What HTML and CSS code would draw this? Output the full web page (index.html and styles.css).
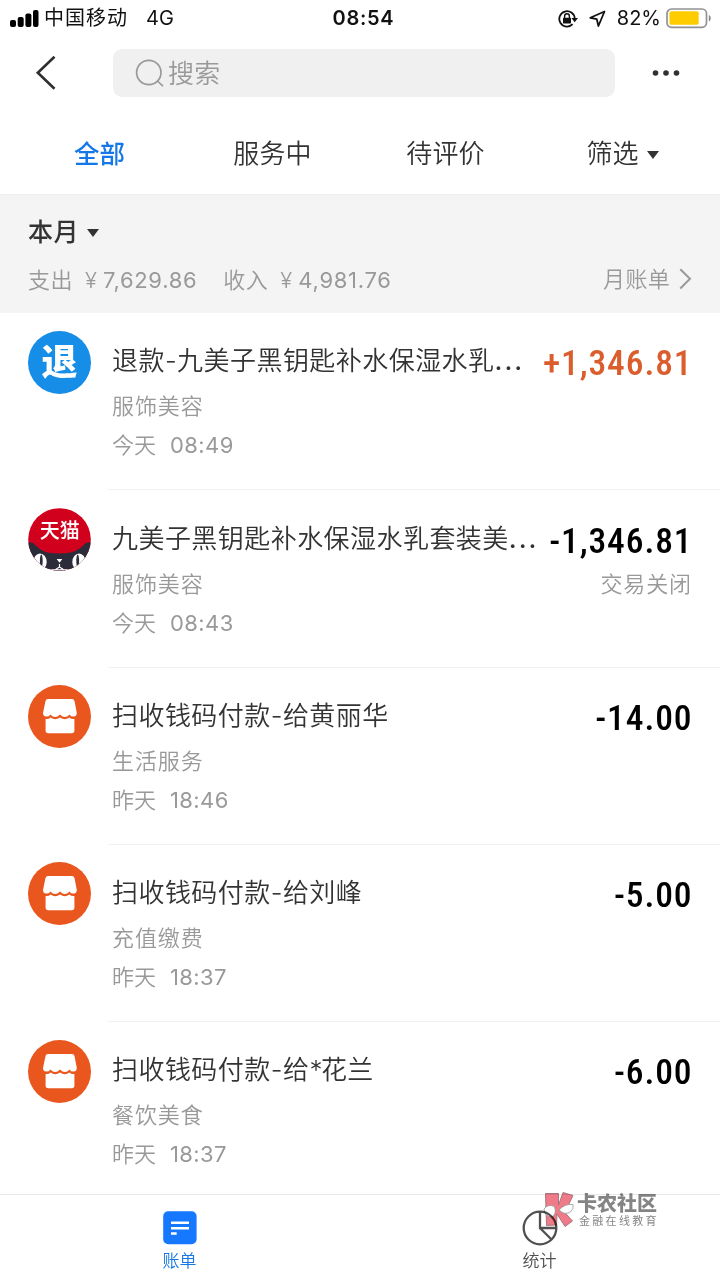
FILE: index.html
```html
<!DOCTYPE html>
<html lang="zh-CN">
<head>
<meta charset="utf-8">
<title>账单</title>
<link rel="stylesheet" href="styles.css">
</head>
<body>
<div class="screen">
  <header class="status">
    <div class="status-left">
      <svg class="signal" width="29" height="18" viewBox="0 0 29 18"><rect x="0" y="10" width="6" height="7" rx="2"/><rect x="7.7" y="7" width="6" height="10" rx="2"/><rect x="15.4" y="3.5" width="6" height="13.5" rx="2"/><rect x="23" y="0" width="5.5" height="17" rx="2"/></svg>
      <span class="carrier">中国移动</span><span class="network">4G</span>
    </div>
    <div class="clock">08:54</div>
    <div class="status-right">
      <svg width="20" height="18" viewBox="0 0 20 18" fill="none" stroke="#111" stroke-width="1.8"><path d="M14.6 14.2A7.7 7.7 0 1 1 16.7 8.5"/><path d="M13.4 8h6.6l-3.3 4.2z" fill="#111" stroke="none"/><rect x="5" y="7.8" width="8" height="5.6" rx=".6" fill="#111" stroke="none"/><path d="M6.6 8V6.2a2.4 2.4 0 0 1 4.8 0V8" stroke-width="1.4"/></svg>
      <svg class="locate" width="17" height="18" viewBox="0 0 17 18" fill="none" stroke="#111" stroke-width="1.8" stroke-linejoin="round"><path d="M15.5 1.5 1.3 7.8l6.5 1.4 1.6 6.8z"/></svg>
      <span class="percent">82%</span>
      <svg class="battery" width="46" height="21" viewBox="0 0 46 21"><rect x="1" y="1" width="39.5" height="18.3" rx="4.5" fill="#fff" stroke="#929292" stroke-width="1.7"/><rect x="3.4" y="3.3" width="29.3" height="13.5" rx="2" fill="#fc0"/><path d="M42.8 7c2.6 1.2 2.6 5.3 0 6.5z" fill="#888"/></svg>
    </div>
  </header>
  <nav class="toolbar">
    <svg class="back" width="22" height="36" viewBox="0 0 22 36" fill="none" stroke="#2f2f2f" stroke-width="2.6"><path d="M19.5 1.8 2.8 17.8l16.7 16"/></svg>
    <div class="search">
      <svg width="29" height="29" viewBox="0 0 29 29" fill="none" stroke="#999" stroke-width="1.7"><circle cx="13.8" cy="13.5" r="12.2"/><path d="m22.4 22 5.6 5.2"/></svg>
      <span>搜索</span>
    </div>
    <svg class="more" width="28" height="8" viewBox="0 0 28 8" fill="#303030"><circle cx="3.5" cy="4" r="2.8"/><circle cx="14" cy="4" r="2.8"/><circle cx="24.5" cy="4" r="2.8"/></svg>
  </nav>
  <div class="tabs">
    <div class="tab active">全部</div><div class="tab">服务中</div><div class="tab">待评价</div>
    <div class="tab filter">筛选<i class="caret"></i></div>
  </div>
  <section class="month">
    <div class="month-name">本月<i class="caret"></i></div>
    <div class="totals">
      <span class="word">支出</span><span class="yen">¥</span><span class="sum">7,629.86</span>
      <span class="word income">收入</span><span class="yen">¥</span><span class="sum">4,981.76</span>
      <span class="monthly">月账单</span>
      <svg width="13" height="22" viewBox="0 0 13 22" fill="none" stroke="#999" stroke-width="2"><path d="m1.3 1.3 9.7 9.5-9.7 9.7"/></svg>
    </div>
  </section>
  <main class="list">
    <article class="row">
      <div class="avatar refund">退</div>
      <div class="info">
        <div class="line"><span class="title">退款-九美子黑钥匙补水保湿水乳<span class="dots">...</span></span><span class="amount plus">+1,346.81</span></div>
        <div class="meta">服饰美容</div>
        <div class="time"><span>今天</span><span class="hour">08:49</span></div>
      </div>
    </article>
    <article class="row">
      <div class="avatar">
        <svg width="63" height="63" viewBox="0 0 63 63"><defs><clipPath id="disc"><circle cx="31.5" cy="31.5" r="31.3"/></clipPath></defs><g clip-path="url(#disc)"><rect width="63" height="63" fill="#d1001c"/><path d="M0 34 5 35C9 39 14 43 19 44.6Q31 46.5 43 44.6C49 43 54 39 58 35l5-1v29H0z" fill="#2b2b3a"/><ellipse cx="12" cy="54" rx="6.7" ry="8.6" fill="#fff"/><ellipse cx="51" cy="54" rx="6.7" ry="8.6" fill="#fff"/><ellipse cx="13.3" cy="53" rx="1.4" ry="6.5" fill="#2b2b3a"/><ellipse cx="49.7" cy="53" rx="1.4" ry="6.5" fill="#2b2b3a"/><path d="M28.7 51h5.6l-2.8 3.8z" fill="#fff"/><path d="M31.5 56v3l-4.5 3m4.5-3 4.5 3M18 61.8h27" fill="none" stroke="#fff" stroke-width="1.2"/></g><text class="tmall" x="31.8" y="30" text-anchor="middle">天猫</text></svg>
      </div>
      <div class="info">
        <div class="line"><span class="title">九美子黑钥匙补水保湿水乳套装美<span class="dots">...</span></span><span class="amount">-1,346.81</span></div>
        <div class="meta"><span>服饰美容</span><span class="state">交易关闭</span></div>
        <div class="time"><span>今天</span><span class="hour">08:43</span></div>
      </div>
    </article>
    <article class="row">
      <div class="avatar shop"><svg width="36" height="37" viewBox="0 0 36 37" fill="#fff"><path d="M6 1h24q2 0 2.5 2l2.3 12q0 3-3 3.6-3 .2-4.3-2.2-4.5 5-9.5 0-5 5-9.5 0Q7 18.8 4 18.6 1 18 1 15L3.5 3Q4 1 6 1z"/><path d="M3.6 21q3.2.4 5-1.6 4.5 3.6 9.4 0 4.9 3.6 9.4 0 1.8 2 5 1.6v11.5q0 2.7-2.7 2.7H6.3q-2.7 0-2.7-2.7z"/></svg></div>
      <div class="info">
        <div class="line"><span class="title">扫收钱码付款-给黄丽华</span><span class="amount">-14.00</span></div>
        <div class="meta">生活服务</div>
        <div class="time"><span>昨天</span><span class="hour">18:46</span></div>
      </div>
    </article>
    <article class="row">
      <div class="avatar shop"><svg width="36" height="37" viewBox="0 0 36 37" fill="#fff"><path d="M6 1h24q2 0 2.5 2l2.3 12q0 3-3 3.6-3 .2-4.3-2.2-4.5 5-9.5 0-5 5-9.5 0Q7 18.8 4 18.6 1 18 1 15L3.5 3Q4 1 6 1z"/><path d="M3.6 21q3.2.4 5-1.6 4.5 3.6 9.4 0 4.9 3.6 9.4 0 1.8 2 5 1.6v11.5q0 2.7-2.7 2.7H6.3q-2.7 0-2.7-2.7z"/></svg></div>
      <div class="info">
        <div class="line"><span class="title">扫收钱码付款-给刘峰</span><span class="amount">-5.00</span></div>
        <div class="meta">充值缴费</div>
        <div class="time"><span>昨天</span><span class="hour">18:37</span></div>
      </div>
    </article>
    <article class="row">
      <div class="avatar shop"><svg width="36" height="37" viewBox="0 0 36 37" fill="#fff"><path d="M6 1h24q2 0 2.5 2l2.3 12q0 3-3 3.6-3 .2-4.3-2.2-4.5 5-9.5 0-5 5-9.5 0Q7 18.8 4 18.6 1 18 1 15L3.5 3Q4 1 6 1z"/><path d="M3.6 21q3.2.4 5-1.6 4.5 3.6 9.4 0 4.9 3.6 9.4 0 1.8 2 5 1.6v11.5q0 2.7-2.7 2.7H6.3q-2.7 0-2.7-2.7z"/></svg></div>
      <div class="info">
        <div class="line"><span class="title">扫收钱码付款-给<span class="star">*</span>花兰</span><span class="amount">-6.00</span></div>
        <div class="meta">餐饮美食</div>
        <div class="time"><span>昨天</span><span class="hour">18:37</span></div>
      </div>
    </article>
  </main>
  <footer class="bottom">
    <div class="dest current">
      <svg width="36" height="36" viewBox="0 0 36 36"><rect x="1.2" y="1.2" width="33.4" height="33" rx="5" fill="#1677ff"/><path d="M9 12.8h18M9 18.2h18M9 23.5h5.7" stroke="#fff" stroke-width="2.6"/></svg>
      <span>账单</span>
    </div>
    <div class="dest">
      <svg width="36" height="36" viewBox="0 0 36 36" fill="none" stroke="#505050" stroke-width="2.3"><circle cx="18" cy="18" r="16.3"/><path d="M18 1.7V18h16.3M18 18l11.5 11.5"/></svg>
      <span>统计</span>
    </div>
    <div class="watermark">
      <svg width="31" height="38" viewBox="0 0 31 38"><g fill="#ed6d7a" stroke="#966067" stroke-width=".9"><path d="M2.5 2.5H15.5L15.5 14 20 1.5 30 4.5 25.5 14 19 18.5 29.5 30 22 35.5 14 23 13.5 34 3.5 34.5z"/></g><path d="M11.5 15.5Q5 12.5 1 18q1 8 8 8 5-3 2.5-10.5zM16 19q6 6 12 1.5 3-3 2-7-8-1-14 5.5z" fill="#fff" stroke="#888" stroke-width=".8"/></svg>
      <div class="brand"><b>卡农社区</b><span>金融在线教育</span></div>
    </div>
  </footer>
</div>
</body>
</html>
```
FILE: styles.css
```css
* { box-sizing: border-box; }
body { margin: 0; background: #fff; font-family: Inter, "Noto Sans CJK SC", sans-serif; color: #333; font-weight: 350; }
svg { display: block; flex: none; }
.screen { width: 720px; height: 1280px; display: flex; flex-direction: column; overflow: hidden; white-space: nowrap; }
.status { height: 37px; flex: none; display: grid; grid-template-columns: 1fr auto 1fr; align-items: center; padding: 0 8px 0 10px; color: #111; font-size: 20px; line-height: 37px; font-weight: 400; }
.status-left, .status-right { display: flex; align-items: center; }
.carrier { margin-left: 5px; letter-spacing: 1px; }
.network { margin-left: 18px; font-size: 20px; }
.clock { font-weight: 600; letter-spacing: .7px; padding: 0 0 0 5px; }
.status-right { justify-content: flex-end; }
.locate { margin-left: 11px; }
.percent { margin-left: 11px; }
.battery { margin-left: 5px; }
.toolbar { height: 75px; flex: none; display: flex; align-items: flex-start; padding: 12px 40px 0 35px; }
.back { margin-top: 6px; }
.search { width: 502px; height: 48px; margin-left: 56px; padding-left: 22px; border-radius: 9px; background: #f0f0f0; display: flex; align-items: center; gap: 4px; font-size: 26px; line-height: 48px; color: #999; letter-spacing: .3px; }
.search span { padding-top: 2px; }
.more { margin-left: 37px; margin-top: 20px; }
.tabs { height: 82px; flex: none; padding: 1px 13px 0; display: grid; grid-template-columns: repeat(4, 173px); text-align: center; font-size: 26px; line-height: 82px; letter-spacing: .1px; }
.active { color: #1677e6; font-weight: 500; font-size: 25.5px; }
.caret { display: inline-block; width: 0; height: 0; border: solid transparent; border-width: 8px 6.5px 0; border-top-color: #333; margin-left: 8px; vertical-align: 4px; }
.filter { padding-left: 8px; }
.month { height: 119px; flex: none; background: #f4f4f4; border-top: 1px solid #eee; padding: 15px 28px 0; }
.month-name { font-size: 25px; font-weight: 500; line-height: 44px; letter-spacing: .6px; }
.totals { display: flex; align-items: center; height: 50px; font-size: 22px; line-height: 50px; color: #999; }
.word, .yen, .sum { padding-top: 2px; letter-spacing: .5px; }
.yen { margin-left: 12px; width: 18px; }
.sum { letter-spacing: .7px; font-weight: 400; }
.income { margin-left: 26px; }
.monthly { margin-left: auto; margin-right: 9px; letter-spacing: .3px; }
.list { flex: none; height: 881px; overflow: hidden; }
.row { height: 177.3px; display: flex; padding-left: 28px; }
.avatar { width: 63px; height: 63px; flex: none; margin-top: 17.6px; border-radius: 50%; display: grid; place-items: center; }
.refund { background: #168de6; color: #fff; font-weight: 900; font-size: 36px; line-height: 60px; }
.shop { background: #e9571f; }
.tmall { fill: #fff; font-size: 20px; font-weight: 500; }
.info { flex: 1; margin-left: 17px; padding: 26.3px 29px 0 4px; border-bottom: 1px solid #f2f2f2; }
.row:last-child .info { border: 0; }
.line { display: flex; justify-content: space-between; height: 44px; line-height: 44px; }
.title { font-size: 26px; letter-spacing: .45px; }
.dots { letter-spacing: 2px; font-weight: 500; }
.star { letter-spacing: -1.5px; }
.amount { font-family: Roboto, sans-serif; color: #000; font-size: 35.5px; font-weight: 500; font-stretch: 85%; letter-spacing: .9px; margin-right: -1.5px; padding-top: 2px; }
.plus { color: #db5c2c; }
.meta { display: flex; justify-content: space-between; font-size: 22px; line-height: 40px; letter-spacing: .9px; color: #999; padding-top: 3px; }
.state { margin-right: -1px; }
.time { display: flex; gap: 14px; font-size: 22px; line-height: 38px; color: #999; }
.hour { letter-spacing: .4px; font-weight: 400; }
.bottom { height: 86px; flex: none; border-top: 1px solid #e8e8e8; display: grid; grid-template-columns: 1fr 1fr; position: relative; color: #505050; }
.dest { display: flex; flex-direction: column; align-items: center; padding-top: 15px; font-size: 17px; line-height: 30px; }
.dest span { margin-right: 1px; }
.current { color: #1677e6; }
.watermark { position: absolute; left: 543px; top: -4px; display: flex; gap: 3px; color: #777; opacity: .9; mix-blend-mode: multiply; }
.brand { display: flex; flex-direction: column; padding-top: 2px; }
.brand b { font-size: 20px; line-height: 23px; font-weight: 900; }
.brand span { font-size: 11px; line-height: 11px; letter-spacing: 2.3px; margin-left: 2px; font-weight: 400; }
```
